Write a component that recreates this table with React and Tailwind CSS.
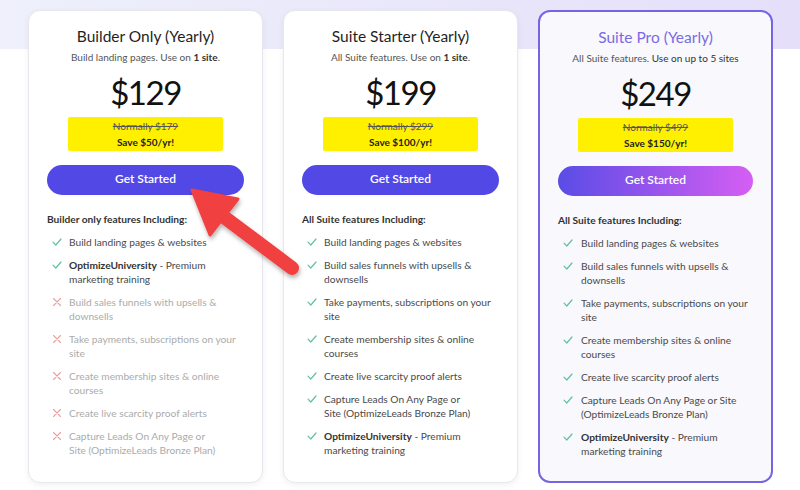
import React from "react";

const Check = () => (
  <svg width="10" height="10" viewBox="0 0 10 10" className="shrink-0 mt-[2px]">
    <polyline points="1,5.2 3.8,8 9,2" fill="none" stroke="#62c29c" strokeWidth="1.2" strokeLinecap="round" strokeLinejoin="round" />
  </svg>
);
const Cross = () => (
  <svg width="10" height="10" viewBox="0 0 10 10" className="shrink-0 mt-[2px]">
    <path d="M1.5 1.5 L8.5 8.5 M8.5 1.5 L1.5 8.5" fill="none" stroke="#eba0a0" strokeWidth="1.1" strokeLinecap="round" />
  </svg>
);

function Feature({ ok = true, lines, pro }) {
  return (
    <li className={`flex ${pro ? "gap-[8px]" : "gap-[7px]"} pl-[5px]`}>
      {ok ? <Check /> : <Cross />}
      <div className={`text-[10.2px] leading-[14px] ${ok ? "text-[#4a4a4a]" : "text-[#ababab]"}`}>
        {lines.map((l, i) => (
          <div key={i} className="whitespace-nowrap">{l}</div>
        ))}
      </div>
    </li>
  );
}

function Card({ title, sub, price, normally, save, heading, features, pro }) {
  return (
    <div
      className={`w-[235px] h-[473px] rounded-[12px] flex flex-col ${
        pro
          ? "border-2 border-[#7565e3] bg-[#f8f8fd] px-[18px] pt-[15px]"
          : "border border-[#e7e7ee] bg-white px-[18px] pt-[15px] shadow-[0_2px_6px_rgba(0,0,0,0.06)]"
      }`}
    >
      <div className={`text-center text-[15.5px] leading-[20px] font-normal ${pro ? "text-[#7a6be3]" : "text-[#1f1f1f]"}`}>{title}</div>
      <div className="mt-[4px] text-center text-[10px] leading-[14px] text-[#555]">{sub}</div>
      <div className="mt-[8px] text-center text-[33px] leading-[40px] font-normal tracking-[-1.5px] text-[#111]">{price}</div>
      <div className="mt-[5px] mx-auto w-[155px] h-[34px] bg-[#fff000] rounded-[2px] flex flex-col items-center justify-center text-[10px] leading-[16px]">
        <div className="line-through text-[#555]">{normally}</div>
        <div className="font-bold text-[#222]">{save}</div>
      </div>
      <button
        className={`mt-[14px] h-[30px] w-full rounded-full text-white text-[12px] font-semibold ${
          pro ? "bg-[linear-gradient(to_right,#5a4ce6,#d65ef3)]" : "bg-[#5248e6]"
        }`}
      >
        <span className="relative top-[-1px]">Get Started</span>
      </button>
      <div className="mt-[17px] text-[10.2px] leading-[14px] font-bold text-[#333]">{heading}</div>
      <ul className="mt-[9px] flex flex-col gap-[9px]">
        {features.map((f, i) => (
          <Feature key={i} ok={f.ok} lines={f.lines} pro={pro} />
        ))}
      </ul>
    </div>
  );
}

const uni = (
  <>
    <span className="font-bold text-[#333]">OptimizeUniversity</span> - Premium
  </>
);

const suiteFeatures = (wideCapture) => [
  { ok: true, lines: ["Build landing pages & websites"] },
  { ok: true, lines: ["Build sales funnels with upsells &", "downsells"] },
  { ok: true, lines: ["Take payments, subscriptions on your", "site"] },
  { ok: true, lines: ["Create membership sites & online", "courses"] },
  { ok: true, lines: ["Create live scarcity proof alerts"] },
  wideCapture
    ? { ok: true, lines: ["Capture Leads On Any Page or Site", "(OptimizeLeads Bronze Plan)"] }
    : { ok: true, lines: ["Capture Leads On Any Page or", "Site (OptimizeLeads Bronze Plan)"] },
  { ok: true, lines: [uni, "marketing training"] },
];

export default function App() {
  return (
    <div
      className="relative w-[800px] h-[490px] overflow-hidden bg-[linear-gradient(to_bottom,transparent_49px,#ffffff_49px),linear-gradient(to_right,#eef0fb,#e5dffa)]"
      style={{ fontFamily: "Lato, 'Noto Sans', sans-serif" }}
    >
      <div className="flex gap-[20px] pl-[28px] pt-[10px]">
        <Card
          title="Builder Only (Yearly)"
          sub={<>Build landing pages. Use on <b className="text-[#333]">1 site</b>.</>}
          price="$129"
          normally="Normally $179"
          save="Save $50/yr!"
          heading="Builder only features Including:"
          features={[
            { ok: true, lines: ["Build landing pages & websites"] },
            { ok: true, lines: [uni, "marketing training"] },
            { ok: false, lines: ["Build sales funnels with upsells &", "downsells"] },
            { ok: false, lines: ["Take payments, subscriptions on your", "site"] },
            { ok: false, lines: ["Create membership sites & online", "courses"] },
            { ok: false, lines: ["Create live scarcity proof alerts"] },
            { ok: false, lines: ["Capture Leads On Any Page or", "Site (OptimizeLeads Bronze Plan)"] },
          ]}
        />
        <Card
          title="Suite Starter (Yearly)"
          sub={<>All Suite features. Use on <b className="text-[#333]">1 site</b>.</>}
          price="$199"
          normally="Normally $299"
          save="Save $100/yr!"
          heading="All Suite features Including:"
          features={suiteFeatures(false)}
        />
        <Card
          pro
          title="Suite Pro (Yearly)"
          sub={<>All Suite features. <span className="text-[#333]">Use on up to 5 sites</span></>}
          price="$249"
          normally="Normally $499"
          save="Save $150/yr!"
          heading="All Suite features Including:"
          features={suiteFeatures(true)}
        />
      </div>
      <svg className="absolute left-0 top-0 pointer-events-none" width="800" height="490">
        <defs>
          <filter id="sh" x="-20%" y="-20%" width="140%" height="140%">
            <feDropShadow dx="1" dy="3" stdDeviation="2" floodColor="#000" floodOpacity="0.3" />
          </filter>
        </defs>
        <g filter="url(#sh)" fill="#f0403f" stroke="#f0403f" strokeLinejoin="round">
          <line x1="224" y1="217" x2="292" y2="268" strokeWidth="14" strokeLinecap="round" />
          <polygon points="192,190 238,199 210,235" strokeWidth="3" />
        </g>
      </svg>
    </div>
  );
}
